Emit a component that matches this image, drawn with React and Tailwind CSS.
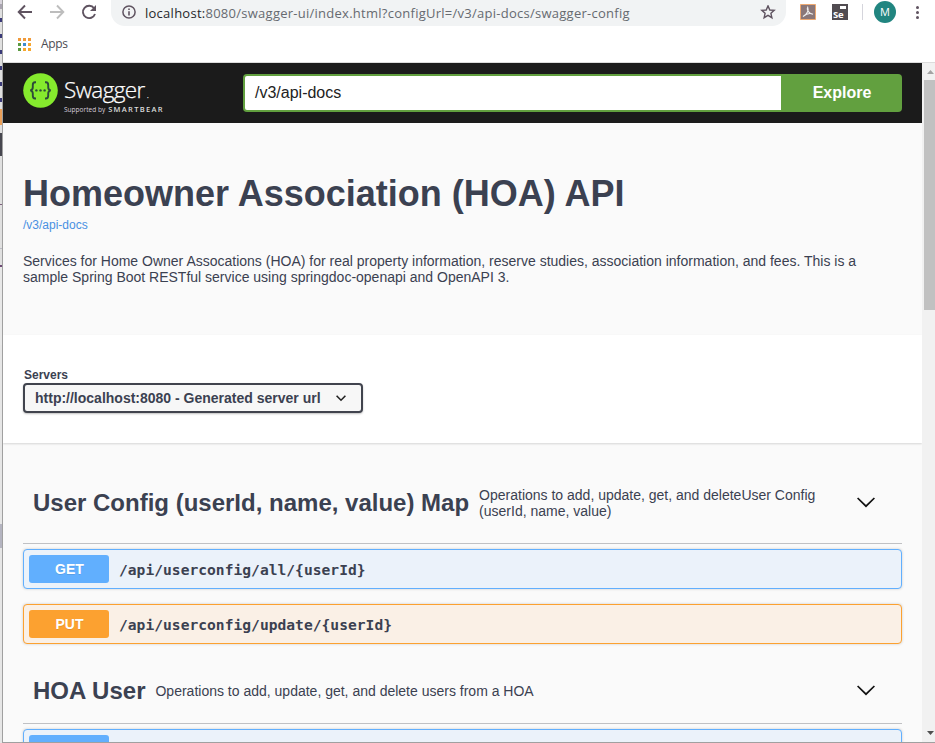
import React from "react";

const EDGE = [
  [4, "#d8d4dc"], [5, "#a9a4b0"], [9, "#e0e0e0"], [4, "#3a3a78"], [12, "#e0e0e0"], [4, "#3a3a78"],
  [12, "#e0e0e0"], [4, "#3a3a78"], [12, "#e0e0e0"], [4, "#3a3a78"], [12, "#e0e0e0"], [4, "#3a3a78"],
  [12, "#e0e0e0"], [4, "#3a3a78"], [7, "#e0e0e0"], [16, "#eba059"], [8, "#e0e0e0"], [23, "#47474f"],
  [48, "#e0e0e0"], [1, "#7c5f7c"], [43, "#e0e0e0"], [1, "#bcbcc4"], [16, "#e0e0e0"], [2, "#6d4a75"],
  [78, "#e8e8e8"], [179, "#e6e6e6"], [24, "#b4b4c0"], [195, "#e6e6e6"],
];

const sans = "font-['Liberation_Sans',Arial,sans-serif]";
const ui = "font-['Open_Sans','Noto_Sans',sans-serif]";

function BrowserBar() {
  return (
    <div className={`${ui} h-[63px] shrink-0 overflow-hidden border-b border-[#dcdcdc] bg-white`}>
      <div className="flex h-[26px] items-start">
        <svg className="block h-[26px] w-[108px] shrink-0" viewBox="3 0 108 26" fill="none" strokeWidth="1.9">
          <path d="M32 12H19M25 5.5L18.7 12L25 18.5" stroke="#5f5360" />
          <path d="M50 12H63M57 5.5L63.3 12L57 18.5" stroke="#bdbdbd" />
          <path d="M94.1 8.2A6.2 6.2 0 1 0 95 14" stroke="#5f5360" />
          <path d="M96 5V11H90Z" fill="#5f5360" />
        </svg>
        <div className="flex h-[26px] w-[675px] shrink-0 items-center rounded-b-[14px] bg-[#f1f3f4] pl-[10px] pr-[10px]">
          <svg className="h-4 w-4 shrink-0" viewBox="0 0 16 16" fill="none" stroke="#5f5360" strokeWidth="1.5">
            <circle cx="8" cy="7" r="6.1" />
            <path d="M8 6.3V10.5M8 3.5V5" strokeWidth="1.6" />
          </svg>
          <span className="ml-2 whitespace-pre text-[13px] leading-[26px] tracking-[0.26px] text-[#666a70]">
            <span className="text-[#27272b]">localhost:</span>8080/swagger-ui/index.html?configUrl=/v3/api-docs/swagger-config
          </span>
          <svg className="ml-auto h-4 w-4 shrink-0" viewBox="0 0 16 16" fill="none" stroke="#5f5360" strokeWidth="1.4">
            <path d="M8 .9L9.8 5L14.2 5.4L10.9 8.3L11.9 12.7L8 10.4L4.1 12.7L5.1 8.3L1.8 5.4L6.2 5Z" />
          </svg>
        </div>
        <svg className="ml-[14px] mt-1 h-4 w-4 shrink-0" viewBox="0 0 16 16">
          <path d="M.5 .5H15.5V15.5H.5Z" fill="#8a7778" stroke="#eda870" />
          <path d="M3 12.5C7 10.5 9 6 7.7 3.2C6.5 5 8 9.5 13 10.2C10 8.8 6 10 3 12.5Z" fill="none" stroke="#eee" strokeWidth="1.1" />
        </svg>
        <div className="ml-4 mt-1 flex h-4 w-4 shrink-0 flex-col bg-[#514c51] text-white">
          <div className="ml-2 mt-[2px] h-[3px] w-[6px] shrink-0 bg-white" />
          <div className="pl-[1px] text-[9.5px] font-bold leading-[11px] tracking-[-0.3px]">Se</div>
        </div>
        <div className="ml-[14px] mt-1 h-4 w-px shrink-0 bg-[#d5d5dc]" />
        <div className="ml-[11px] mt-[1px] flex h-[22px] w-[22px] shrink-0 items-center justify-center rounded-full bg-[#218580] text-[11px] text-white">M</div>
        <div className="ml-[20px] mt-[6px] flex w-[3px] flex-col gap-[2px]">
          <i className="h-[3px] w-[3px] rounded-full bg-[#5f5360]" />
          <i className="h-[3px] w-[3px] rounded-full bg-[#5f5360]" />
          <i className="h-[3px] w-[3px] rounded-full bg-[#5f5360]" />
        </div>
      </div>
      <div className="flex h-9 items-center pl-[15px]">
        <div className="grid grid-cols-[3px_3px_3px] gap-[2px]">
          {["#f09a3a", "#f09a3a", "#f09a3a", "#5b9a41", "#3d8bd0", "#f6a72f", "#5b9a41", "#f6a72f", "#f6a72f"].map((c, i) => (
            <i key={i} className="h-[3px] w-[3px]" style={{ background: c }} />
          ))}
        </div>
        <span className="ml-[10px] text-[12px] leading-4 tracking-[-0.3px] text-[#4b4b52]">Apps</span>
      </div>
    </div>
  );
}

function Topbar() {
  return (
    <div className="flex h-[60px] shrink-0 items-start bg-[#1b1b1b] pl-5 pt-[10px]">
      <svg className="h-[35px] w-[35px] shrink-0" viewBox="0 0 35 35">
        <circle cx="17.5" cy="17.5" r="17.3" fill="#85ea2d" />
        <g fill="none" stroke="#2d4a3a" strokeWidth="1.9">
          <path d="M13 9.3H12C10 9.3 9.8 10.3 9.8 12V14.3C9.8 16.3 9 17.2 7.2 17.4C9 17.6 9.8 18.5 9.8 20.5V22.8C9.8 24.5 10 25.5 12 25.5H13" />
          <path d="M22 9.3H23C25 9.3 25.2 10.3 25.2 12V14.3C25.2 16.3 26 17.2 27.8 17.4C26 17.6 25.2 18.5 25.2 20.5V22.8C25.2 24.5 25 25.5 23 25.5H22" />
        </g>
        <g fill="#2d4a3a">
          <circle cx="13.4" cy="17.4" r="1.2" />
          <circle cx="17.5" cy="17.4" r="1.2" />
          <circle cx="21.6" cy="17.4" r="1.2" />
        </g>
      </svg>
      <div className={`${ui} ml-[6px] mt-[3px] w-[179px] shrink-0 whitespace-nowrap text-white`}>
        <div className="flex h-[28px] items-baseline text-[22.5px] font-light leading-[28px] tracking-[-0.6px] [-webkit-text-stroke:0.25px_white]">
          Swagger<span className="ml-[2px] text-[9px]">.</span>
        </div>
        <div className="flex items-baseline leading-[10px]">
          <span className="text-[6.5px] tracking-[0.02px] text-[#d9d0dd]">Supported by</span>
          <span className="ml-[3px] text-[7.5px] font-semibold tracking-[1.3px] text-[#ddd]">SMARTBEAR</span>
        </div>
      </div>
      <div className="mt-[1px] flex h-[38px] w-[659px] overflow-hidden rounded-[4px] bg-[#62a03f]">
        <div className="my-[2px] ml-[2px] flex w-[536px] items-center rounded-l-[2px] bg-white pl-[10px] text-[16px] text-[#222]">/v3/api-docs</div>
        <div className="flex flex-1 items-center justify-center pl-[1px] text-[16px] font-bold text-white">Explore</div>
      </div>
    </div>
  );
}

function Chevron() {
  return (
    <svg className="h-5 w-5 shrink-0" viewBox="0 0 20 20" fill="none" stroke="#111" strokeWidth="1.7">
      <path d="M1.6 5L10 13.2L18.4 5" />
    </svg>
  );
}

function TagHeader({ title, compact, children }) {
  return (
    <div className={`flex shrink-0 items-center border-b border-[#c0c1c4] pl-[10px] pr-[26px] ${compact ? "mt-[15px] h-[65px]" : "h-[81px]"}`}>
      <h3 className="mr-[10px] whitespace-nowrap text-[24px] font-bold leading-7">{title}</h3>
      <p className="flex-1 text-[14px] leading-4">{children}</p>
      <Chevron />
    </div>
  );
}

function Operation({ method, path }) {
  const get = method === "GET";
  return (
    <div className={`flex h-10 shrink-0 items-center rounded-[4px] border pl-[5px] shadow-[0_0_3px_rgba(0,0,0,0.19)] ${get ? "border-[#61affe] bg-[#ebf2fa]" : "border-[#fca130] bg-[#faf0e6]"}`}>
      <span className={`flex h-7 w-20 items-center justify-center rounded-[3px] pl-[1px] text-[14px] font-bold text-white [text-shadow:0_1px_0_rgba(0,0,0,0.1)] ${get ? "bg-[#61affe]" : "bg-[#fca130]"}`}>{path && method}</span>
      <span className="ml-[10px] pt-[2px] font-['DejaVu_Sans_Mono',monospace] text-[14.6px] font-bold tracking-[0.02px]">{path}</span>
    </div>
  );
}

export default function App() {
  return (
    <div className={`${sans} flex h-[743px] w-[935px] overflow-hidden bg-[#fafafa] text-[#3b4151]`}>
      <div className="flex w-[2px] shrink-0 flex-col">
        {EDGE.map(([height, background], i) => (
          <i key={i} className="w-full shrink-0" style={{ height, background }} />
        ))}
      </div>
      <div className="flex min-w-0 flex-1 flex-col border-b border-l border-[#a0a0a0]">
        <BrowserBar />
        <div className="flex min-h-0 flex-1">
          <main className="flex w-[919px] shrink-0 flex-col overflow-hidden">
            <Topbar />
            <section className="h-[212px] shrink-0 pl-5 pt-[50px]">
              <h1 className="whitespace-nowrap text-[36px] font-bold leading-[41px]">Homeowner Association (HOA) API</h1>
              <a className="mt-1 block text-[12px] leading-[15px] text-[#4990e2]">/v3/api-docs</a>
              <p className="mt-5 w-[860px] text-[14px] leading-4">
                Services for Home Owner Assocations (HOA) for real property information, reserve studies, association information, and fees. This is a sample Spring Boot RESTful service using springdoc-openapi and OpenAPI 3.
              </p>
            </section>
            <section className="h-[108px] shrink-0 bg-white pl-5 pt-8 shadow-[0_1px_2px_rgba(0,0,0,0.15)]">
              <div className="pl-[1px] text-[12px] font-bold leading-4">Servers</div>
              <div className="flex h-[30px] w-[340px] items-center justify-between rounded-[4px] border-2 border-[#41444e] bg-[#f7f7f7] pl-[10px] pr-[14px] text-[14px] font-bold shadow-[0_1px_2px_rgba(0,0,0,0.25)]">
                <span>http://localhost:8080 - Generated server url</span>
                <svg className="h-3 w-3" viewBox="0 0 12 12" fill="none" stroke="#222" strokeWidth="1.6">
                  <path d="M1.6 3.8L6 8.2L10.4 3.8" />
                </svg>
              </div>
            </section>
            <section className="flex flex-col px-5 pt-5">
              <TagHeader title="User Config (userId, name, value) Map">
                Operations to add, update, get, and deleteUser Config<br />(userId, name, value)
              </TagHeader>
              <div className="mt-[5px] flex flex-col gap-[15px]">
                <Operation method="GET" path="/api/userconfig/all/{userId}" />
                <Operation method="PUT" path="/api/userconfig/update/{userId}" />
              </div>
              <TagHeader title="HOA User" compact>Operations to add, update, get, and delete users from a HOA</TagHeader>
              <div className="mt-[5px] flex flex-col">
                <Operation method="GET" />
              </div>
            </section>
          </main>
          <aside className="flex flex-1 flex-col items-end bg-[#f1f1f1]">
            <svg className="h-[17px] w-[11px] shrink-0" viewBox="0 0 11 17"><path d="M3 11L6.5 7L10 11Z" fill="#a3a3a3" /></svg>
            <div className="h-[230px] w-[11px] bg-[#c1c1c1]" />
            <svg className="mt-auto h-[17px] w-[11px] shrink-0" viewBox="0 0 11 17"><path d="M3 6L6.5 10L10 6Z" fill="#505050" /></svg>
          </aside>
        </div>
      </div>
    </div>
  );
}
